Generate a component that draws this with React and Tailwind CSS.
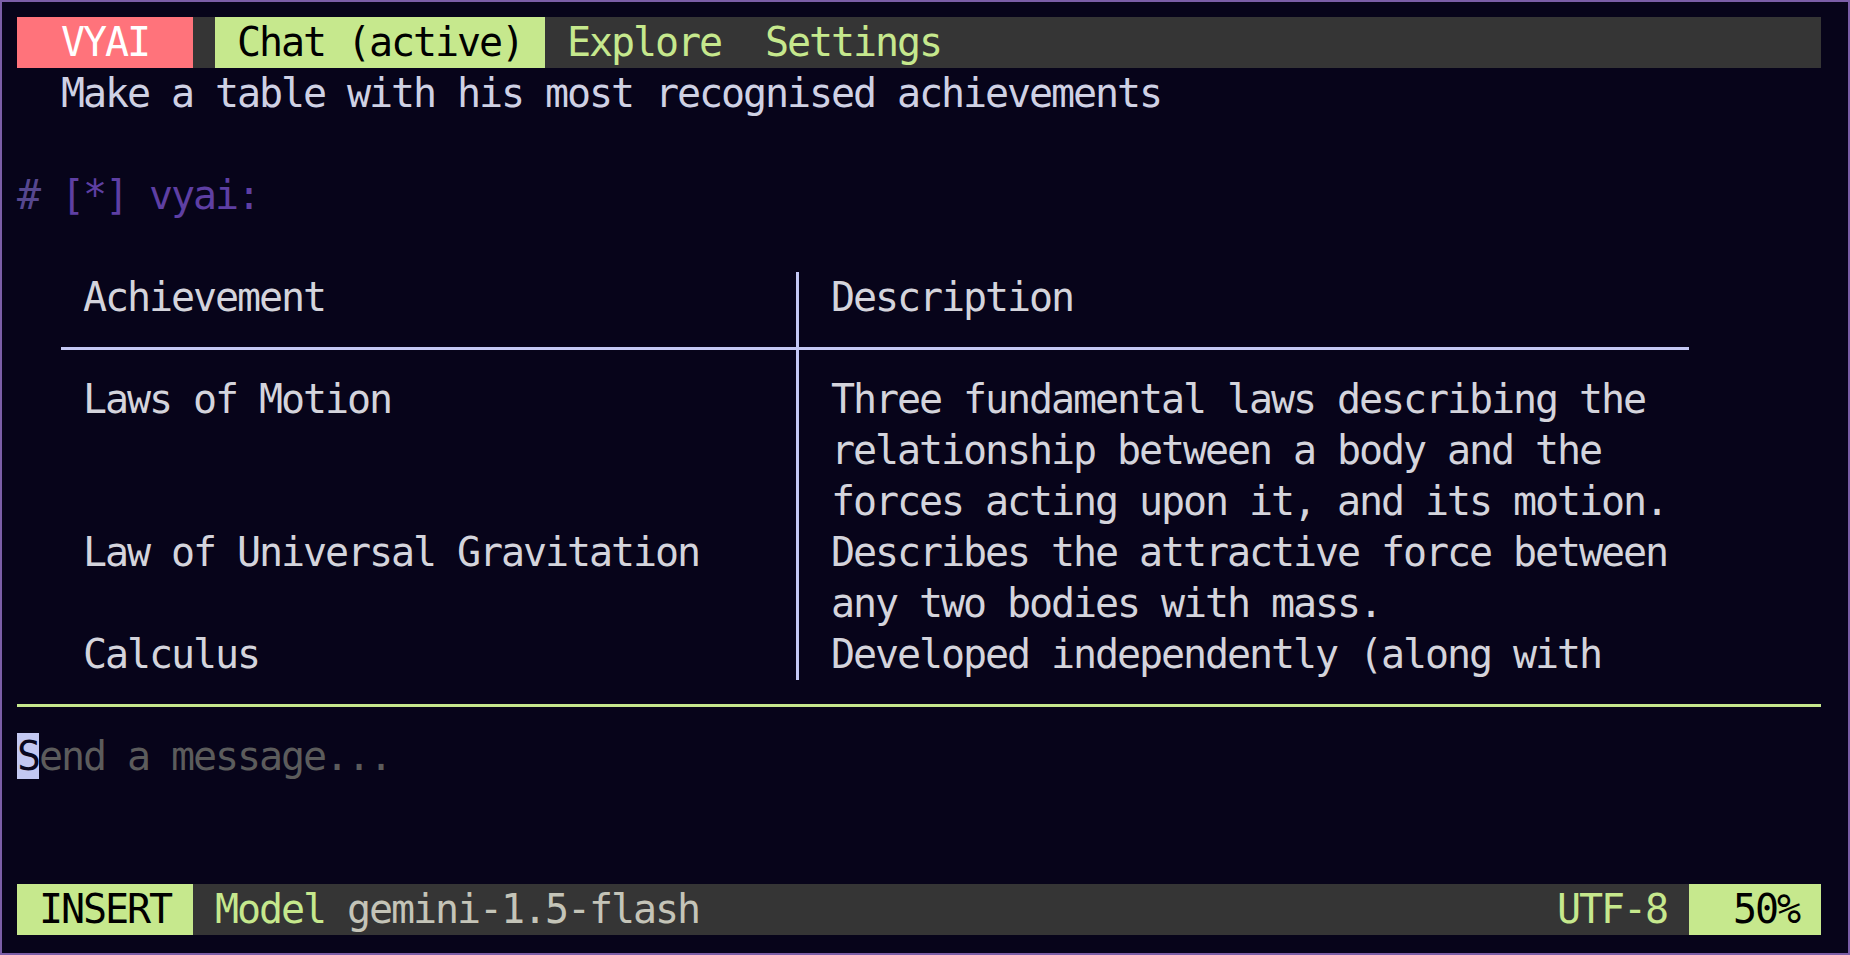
import React from "react";

const GREEN = "text-[#c6e88d]";

const rows = [
  {
    name: "Laws of Motion",
    desc: [
      "Three fundamental laws describing the",
      "relationship between a body and the",
      "forces acting upon it, and its motion.",
    ],
  },
  {
    name: "Law of Universal Gravitation",
    desc: ["Describes the attractive force between", "any two bodies with mass."],
  },
  {
    name: "Calculus",
    desc: ["Developed independently (along with"],
  },
];

const Line = ({ children, className = "" }) => (
  <div className={`h-[51px] leading-[51px] whitespace-pre ${className}`}>{children}</div>
);

const TopBar = () => (
  <div className="flex h-[51px] leading-[51px] bg-[#353535] whitespace-pre">
    <span className="w-[176px] bg-[#ff737b] text-white text-center">VYAI</span>
    <span className="w-[22px]" />
    <span className="w-[330px] bg-[#c6e88d] text-black"> Chat (active) </span>
    <span className={GREEN}> Explore  Settings</span>
  </div>
);

const AchievementTable = () => (
  <div className="ml-[44px] w-[1628px] flex flex-col text-[#d4d4dc]">
    <div className="flex h-[51px] leading-[51px]">
      <div className="w-[735px] pl-[22px]">Achievement</div>
      <div className="w-[3px] bg-[#c4c8f4]" />
      <div className="pl-[32px]">Description</div>
    </div>
    <div className="flex h-[51px] items-center">
      <div className="w-[735px] h-[3px] bg-[#c4c8f4]" />
      <div className="w-[3px] self-stretch bg-[#c4c8f4]" />
      <div className="flex-1 h-[3px] bg-[#c4c8f4]" />
    </div>
    {rows.map((r) => (
      <div key={r.name} className="flex">
        <div className="w-[735px] pl-[22px]">
          <Line>{r.name}</Line>
        </div>
        <div className="w-[3px] bg-[#c4c8f4]" />
        <div className="pl-[32px]">
          {r.desc.map((d) => (
            <Line key={d}>{d}</Line>
          ))}
        </div>
      </div>
    ))}
  </div>
);

const StatusBar = () => (
  <div className="flex h-[51px] leading-[51px] bg-[#353535] whitespace-pre">
    <span className="w-[176px] bg-[#c6e88d] text-black text-center">INSERT</span>
    <span className="flex-1">
      <span className={GREEN}> Model</span>
      <span className="text-[#c4c4b8]"> gemini-1.5-flash</span>
    </span>
    <span className={GREEN}>UTF-8 </span>
    <span className="w-[132px] bg-[#c6e88d] text-black">  50% </span>
  </div>
);

export default function App() {
  return (
    <div
      className="w-[1850px] h-[955px] overflow-hidden bg-[#07041a] border-2 border-[#7b5ea7] pl-[15px] pt-[15px] text-[40px] tracking-[-2.08px]"
      style={{ fontFamily: '"DejaVu Sans Mono", "Liberation Mono", monospace' }}
    >
      <div className="w-[1804px] flex flex-col">
        <TopBar />
        <Line className="text-[#cfd1e4]">  Make a table with his most recognised achievements</Line>
        <Line />
        <Line>
          <span className="text-[#56478f]">#</span>
          <span className="text-[#5e3fa3]"> [*] vyai:</span>
        </Line>
        <Line />
        <AchievementTable />
        <div className="h-[51px] flex items-center">
          <div className="w-full h-[3px] bg-[#c6e88d]" />
        </div>
        <Line>
          <span className="bg-[#c3c8f2] text-[#0a0820]">S</span>
          <span className="text-[#5c5c5c]">end a message...</span>
        </Line>
        <Line />
        <Line />
        <StatusBar />
      </div>
    </div>
  );
}
